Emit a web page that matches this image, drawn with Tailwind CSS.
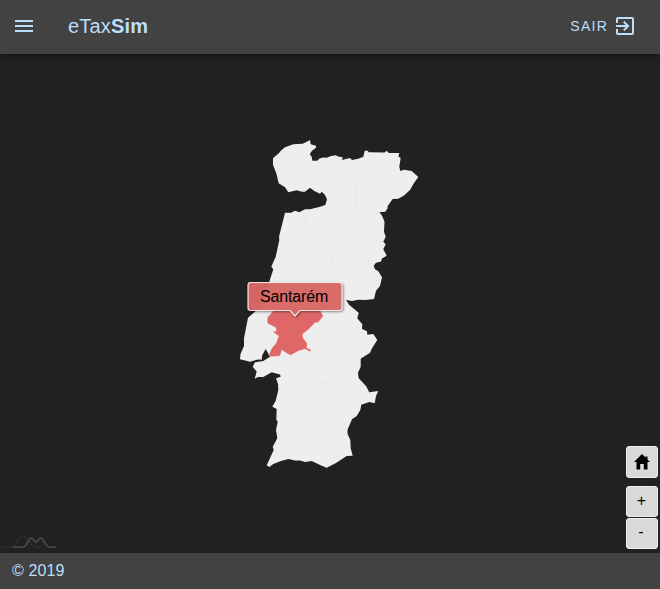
<!DOCTYPE html>
<html lang="pt">
<head>
<meta charset="utf-8">
<title>eTaxSim</title>
<script src="https://cdn.jsdelivr.net/npm/@tailwindcss/browser@4"></script>
</head>
<body class="flex h-screen flex-col overflow-hidden bg-[#212121] font-['Liberation_Sans',Arial,sans-serif] text-[#bbdefb]">
<header class="z-10 flex h-[54px] shrink-0 items-center bg-[#424242] pr-[23px] pl-3 shadow-[0_2px_5px_rgba(0,0,0,0.4)]">
  <svg class="-mt-0.5 size-6" viewBox="0 0 24 24" fill="currentColor"><path d="M3 6h18v2H3V6m0 5h18v2H3v-2m0 5h18v2H3v-2z"/></svg>
  <h1 class="-mt-0.5 ml-8 text-[20px] leading-6 tracking-[0.2px]">eTax<b>Sim</b></h1>
  <button class="-mt-0.5 ml-auto flex items-center text-[14px] tracking-[1.25px]">
    <span class="mr-[5px]">SAIR</span>
    <svg class="size-6" viewBox="0 0 24 24" fill="currentColor"><path d="M19 3H5a2 2 0 0 0-2 2v4h2V5h14v14H5v-4H3v4a2 2 0 0 0 2 2h14a2 2 0 0 0 2-2V5a2 2 0 0 0-2-2m-8.920 12.580L11.500 17l5-5-5-5-1.420 1.410L12.670 11H3v2h9.670l-2.590 2.580z"/></svg>
  </button>
</header>
<main class="relative min-h-0 flex-1">
  <svg class="block h-[499px] w-[660px]" viewBox="0 54 660 499">
    <path fill="#eee" d="M310 140L310.7 144.300 316 145.700 316 147.700 312 150.700 309.700 154.300 311.700 156.700 312.300 160.700 317.300 160.700 319.500 158.500 323.300 157.500 326.700 157.800 331 156 336 155.200 338 156.500 342.700 157.300 342 160 350 158 352 160 358.300 158.700 363.300 156.700 364.700 150.700 367.700 150.700 368.700 152.300 384.700 152.600 386.700 150.700 388.700 153 399.300 153 398.500 156.500 400.700 158 399.300 166.700 400.300 171 404 169.800 411.700 171 418.300 177 414 183 410 190 404 195.500 398.300 198.700 392.700 199 387.700 206 387.500 208.500 385.300 211.700 379.300 212.300 382 215.500 383 218 384.500 221.700 384 231.700 385.700 236.700 383.300 241.700 385.700 244.300 383.300 249.300 386.700 255.700 382 258.500 381 261.500 376 262.700 373.700 265.700 375 269.300 378.300 271.300 382 277.300 380 286 376 290.700 374 299 366 300 358 299.800 352 301 346 300 349.300 305 358.700 312.700 357.300 318.300 362.300 324.300 362 329 367 331.300 367.300 334.700 373.300 334 377.300 340 372 348.300 370 352.700 360.700 358.700 360.700 366.700 358 372.700 358.700 378.300 366 386 369.300 392.300 378.300 391 376 396 374.700 403.300 369.300 402 361.300 404.700 360.300 410 356.700 416 352 419.300 347.700 429.300 347.300 433.300 350.300 440 350.700 448.300 352.700 455.700 346.700 456 336 463 326.700 467.700 321.700 465.700 311.700 461 305 462 300 460.500 295 460.500 288.300 459 281 461 273.300 464 269.300 467 266.700 465.300 270.500 457 273.700 450 272.700 446.700 277.300 438.300 276 430 277.700 421.700 276.300 419.500 276.700 409 272.300 406.700 275.700 400.700 278.300 390 278 384 276 378.300 280.700 376.700 280 374.500 271.700 372.300 263.300 377 258 377 254.700 378.700 256.700 371.700 252.700 366.700 255 362.300 263.300 361 270 356.700 265.700 349 262.300 355 261.700 359.700 258 359.500 250 361.700 240 359.300 240.500 354 244 346 244 338.300 248 317.700 257 310 261 300 266 290 269.300 281.700 273.300 269.300 271.300 266.700 275.700 256.700 279.300 240 279 236.700 285 212.700 291 212.700 295 210.700 299.300 212.300 305 209.300 310 209.300 320 206.700 325.300 205 327 199.300 325 195 321.700 191.700 320 193.700 314.300 191 310 187.700 305 191.700 302 191.700 296.700 190.300 288.300 192.300 285 187.300 278.700 183.300 276.300 173.300 273 165 273 158.300 279 153 281 150.500 285 147.300 293.300 144.300 302.700 143.700 308.300 141z"/>
    <path fill="none" stroke="#e0e0e0" stroke-width=".6" stroke-dasharray="2 1" d="M281 173l11-3 10-6 11-3M318 160l-1 8 6 8 6 3-3 8-1 7M364 157l-2 11-3 11-4 9 1 13-14 4-14 1M356 201l1 8 11 2 11 4M313 209l-8 7-1 13 4 11-6 14-9 1-13-8M302 256l11 1 18-9 9-8 7-9-3-8 11-7 2-10M331 249l1 12-4 12-8 4-19 0-13-4-13 0M331 276l8-11 9-5 9-7 5 8 12 0M312 340l11 6 11-2 12-3 9 11 14-2M305 371l10 12 14 0 15 9 12-7 7-1M315 383l-7 12-5 1 2 15-12 3-5 5-10-3M280 440l9 0 8 0 8-1 12 7 10-6 11-5 10-2"/>
    <path fill="#df6767" stroke="#eee" stroke-width=".3" d="M272 306l1 5-5.700 6.700v5.600l8.700 4.400v3.300l-3.300.7 6 4.300-2.700 7.300-4.300 5-3 6.700 2 1.700 9.300-.7 2-6 4.500 3.200 4.200 2.100 7.600-4.300 6.700-2 5 2.700 1.300-1.700-4.600-2.300.6-4-4.600-6.400v-3.300l6.300-5 6-6.300 3.300-.3 5-6.400-3-5.500-2-4z"/>
  </svg>
  <div class="absolute top-[228px] left-[244px]">
    <svg class="block h-[42px] w-[106px] drop-shadow-[1px_1px_1px_rgba(0,0,0,0.45)]" viewBox="0 0 106 42"><path d="M6 .5H95.500Q98 .5 98 3V26Q98 28.500 95.500 28.500H56L51 34 46 28.500H6.500Q4 28.500 4 26V3Q4 .5 6.500 .5z" fill="#d96b69" stroke="#fff" stroke-opacity=".85" stroke-width="1.200"/><path d="M5 27.500V2H25L19 18 15 27.500z" fill="#cf605f" opacity=".55"/></svg>
    <span class="absolute top-[5px] left-4 text-[16px] leading-5 tracking-[-0.15px] text-black">Santarém</span>
  </div>
  <div class="absolute right-0.5 bottom-1 flex w-8 flex-col text-[16px] text-black">
    <button class="mb-2 flex h-8 items-center justify-center rounded-[3px] border border-[#f0f0f0] bg-[#d9d9d9]"><svg class="h-4 w-4" viewBox="0 0 16 16"><path d="M8 0L0 8H2.500V15.500H6.200V10H9.800V15.500H13.500V8H16L13.500 5.500V2.500H11.500V3.500z"/></svg></button>
    <button class="mb-px h-[31px] rounded-[3px] border border-[#f0f0f0] bg-[#d9d9d9] pr-px pb-0.5 leading-5">+</button>
    <button class="h-[31px] rounded-[3px] border border-[#f0f0f0] bg-[#d9d9d9] pr-0.5 pb-1 leading-5">-</button>
  </div>
  <svg class="absolute bottom-0 left-0 h-6 w-16" viewBox="0 529 64 24" fill="none" stroke-width="1.600"><path stroke="#2e2e2e" d="M2 547H11C16 547 18 536 23 536S30 547 36 547H42"/><path stroke="#4e4e4e" d="M13 547H23C27 547 28 538 31.500 538C34 538 34 542 36 542S38.500 538 41 538C44 538 45 547 49 547H56"/></svg>
</main>
<footer class="h-9 shrink-0 bg-[#424242] pl-3 text-[16px] leading-[35px] tracking-[0.1px]">© 2019</footer>
</body>
</html>
